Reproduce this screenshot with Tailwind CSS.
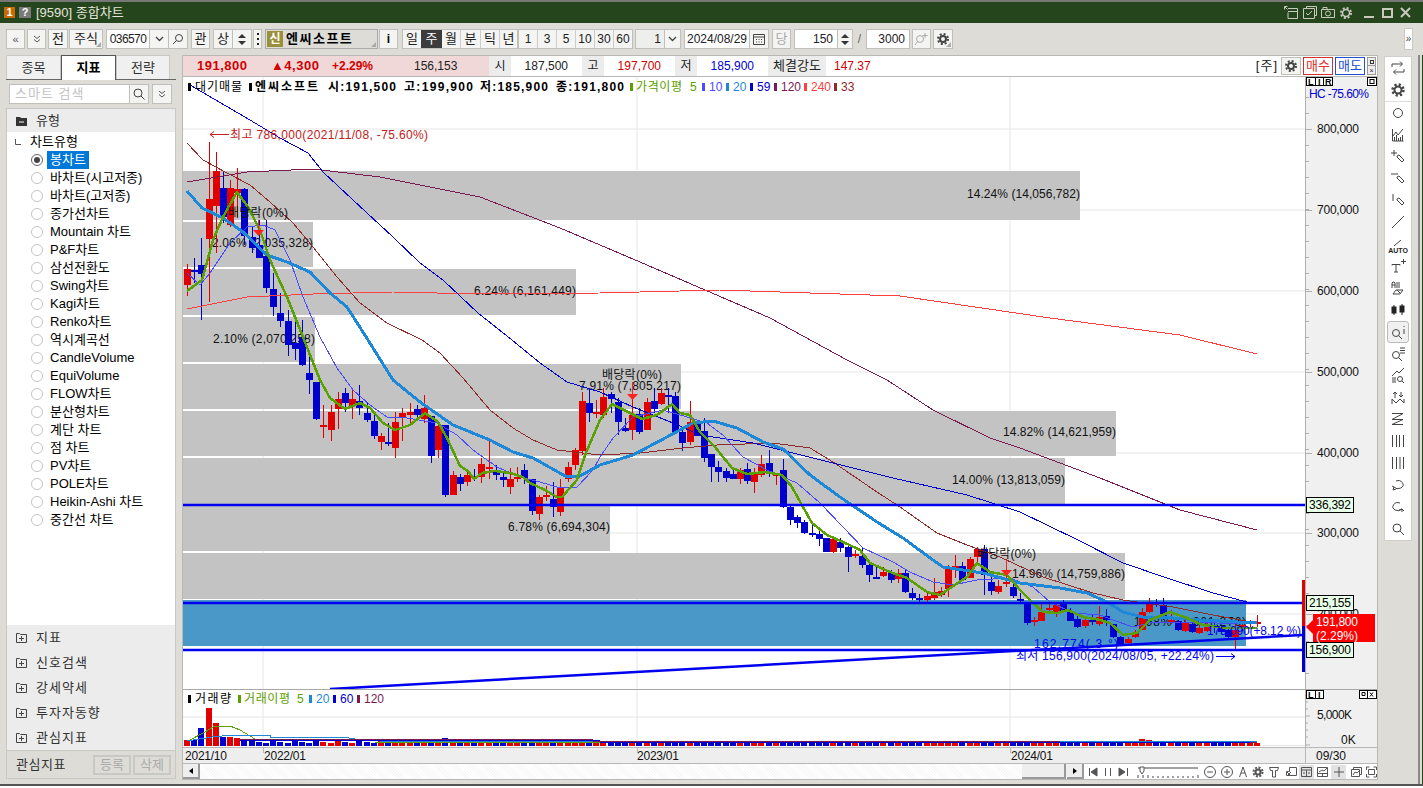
<!DOCTYPE html>
<html lang="ko">
<head>
<meta charset="utf-8">
<title>[9590] 종합차트</title>
<script src="https://cdn.jsdelivr.net/npm/@tailwindcss/browser@4"></script>
</head>
<body class="bg-white">
<div class="relative h-[786px] w-[1423px] overflow-hidden border-b-2 border-[#555] bg-[#dddcd7] text-xs text-[#222] [font-family:'Liberation_Sans','Noto_Sans_CJK_KR',sans-serif]">

  <!-- title bar -->
  <div class="flex h-[23px] items-center border-t-2 border-[#777] bg-[#25461c] pl-1 pr-3 text-[#e4e4dc]">
    <span class="flex h-[11px] w-[11px] items-center justify-center bg-[#c86a00] text-[11px] font-bold leading-none text-white">1</span>
    <span class="ml-[4px] flex h-[11px] w-[12px] items-center justify-center bg-[#7a7a7a] text-[11px] font-bold leading-none text-white">?</span>
    <span class="ml-[5px] text-[13px]">[9590] 종합차트</span>
    <div class="ml-auto flex items-center text-[#c9c9c0]">
      <svg class="mr-[5px]" width="14" height="13" viewBox="0 0 14 13" fill="none" stroke="currentColor"><path d="M4 2.5h9.5v10h-9.5v-6M4 5.5h9.5M.5 .5l3 3M.5 .5h3M.5 .5v3"/></svg>
      <svg class="mr-[4px]" width="14" height="13" viewBox="0 0 14 13" fill="none" stroke="currentColor"><path d="M3.500 2.500v-2h10v9h-2M.5 2.500h11v10h-11zM3 7l2 2 4-4"/></svg>
      <svg class="mr-[5px]" width="14" height="13" viewBox="0 0 14 13" fill="none" stroke="currentColor"><path d="M.5 3.500h13v8h-13zM2 3.500v-2h4v2"/><circle cx="7" cy="7.500" r="2.500"/></svg>
      <svg class="mr-[12px]" width="12" height="12" viewBox="0 0 12 12" fill="none" stroke="currentColor"><circle cx="6" cy="6" r="3.500" stroke-width="1.500"/><circle cx="6" cy="6" r="5" stroke-width="2" stroke-dasharray="2 1.930"/></svg>
      <span class="mr-[8px] mt-[9px] h-[2px] w-[10px] bg-current"></span>
      <span class="mr-[7px] h-[10px] w-[11px] border-2 border-current"></span>
      <svg width="11" height="11" viewBox="0 0 11 11" stroke="currentColor" stroke-width="2"><path d="M1 1l9 9M10 1l-9 9"/></svg>
    </div>
  </div>

  <!-- toolbar -->
  <div class="relative flex h-[32px] items-start pl-[6px] pt-[6px]">
    <button class="flex h-5 w-[19px] items-center justify-center border border-[#c0c0ba] bg-[#f4f4f2] text-[11px] text-[#555]">«</button>
    <button class="ml-[2px] flex h-5 w-[19px] items-center justify-center border border-[#c0c0ba] bg-[#f4f4f2]"><svg width="8" height="8" viewBox="0 0 8 8" fill="none" stroke="#555"><path d="M1 1l3 2.500 3-2.500M1 4.500l3 2.500 3-2.500"/></svg></button>
    <button class="ml-[2px] flex h-5 w-[20px] items-center justify-center border border-[#c0c0ba] bg-[#f4f4f2] text-[13px]">전</button>
    <button class="relative ml-[1px] flex h-5 w-[34px] items-center justify-center border border-[#c0c0ba] bg-[#f4f4f2] text-[13px]">주식<span class="absolute bottom-[1px] right-[1px] h-0 w-0 border-b-[5px] border-l-[5px] border-b-[#aaa] border-l-transparent"></span></button>
    <span class="ml-[3px] flex h-5 w-[44px] items-center justify-center border border-[#c0c0ba] bg-white tracking-[-.6px]">036570</span>
    <button class="flex h-5 w-[19px] items-center justify-center border border-l-0 border-[#c0c0ba] bg-[#f4f4f2]"><svg width="9" height="6" viewBox="0 0 9 6" fill="none" stroke="#444" stroke-width="1.300"><path d="M1 1l3.500 3.500L8 1"/></svg></button>
    <button class="flex h-5 w-[19px] items-center justify-center border border-l-0 border-[#c0c0ba] bg-[#f4f4f2]"><svg width="12" height="12" viewBox="0 0 12 12" fill="none" stroke="#444"><circle cx="7" cy="5" r="3.500"/><path d="M4.500 7.500L1 11"/></svg></button>
    <button class="ml-[3px] flex h-5 w-[19px] items-center justify-center border border-[#c0c0ba] bg-[#f4f4f2] text-[13px]">관</button>
    <button class="ml-[3px] flex h-5 w-[20px] items-center justify-center border border-[#c0c0ba] bg-[#f4f4f2] text-[13px]">상</button>
    <button class="flex h-5 w-[19px] flex-col items-center justify-center gap-[3px] border border-l-0 border-[#c0c0ba] bg-[#f4f4f2]"><span class="h-0 w-0 border-x-[4px] border-b-[4px] border-x-transparent border-b-[#333]"></span><span class="h-0 w-0 border-x-[4px] border-t-[4px] border-x-transparent border-t-[#333]"></span></button>
    <button class="ml-[1px] flex h-5 w-[9px] flex-col items-center justify-center gap-[3px] border border-[#c0c0ba] bg-[#f4f4f2]"><span class="h-[2px] w-[2px] bg-[#222]"></span><span class="h-[2px] w-[2px] bg-[#222]"></span><span class="h-[2px] w-[2px] bg-[#222]"></span></button>
    <div class="relative ml-[3px] flex h-5 w-[113px] items-center border border-[#aaa] bg-[#dddcd7] pl-[1px]">
      <span class="flex h-4 w-4 items-center justify-center bg-[#9a8f3a] font-bold text-white">신</span>
      <span class="ml-[3px] text-[13px] font-bold tracking-[1.500px] text-black">엔씨소프트</span>
      <span class="absolute bottom-[1px] right-[1px] h-0 w-0 border-b-[5px] border-l-[5px] border-b-[#aaa] border-l-transparent"></span>
    </div>
    <button class="ml-[1px] flex h-5 w-[19px] items-center justify-center border border-[#c0c0ba] bg-[#f4f4f2] font-bold text-black">i</button>
    <div class="ml-[4px] flex h-5 border border-[#c0c0ba] bg-[#f4f4f2] text-center text-[13px] leading-[18px]">
      <span class="w-[18px]">일</span><span class="w-[21px] bg-[#3c3c3c] text-white">주</span><span class="w-[18px]">월</span><span class="w-[20px] border-l border-[#ccc]">분</span><span class="w-[19px] border-l border-[#ccc]">틱</span><span class="w-[18px] border-l border-[#ccc]">년</span>
    </div>
    <div class="flex h-5 border border-[#c0c0ba] bg-[#f4f4f2] text-center leading-[18px]">
      <span class="w-[18px]">1</span><span class="w-[19px] border-l border-[#ccc]">3</span><span class="w-[19px] border-l border-[#ccc]">5</span><span class="w-[19px] border-l border-[#ccc]">10</span><span class="w-[19px] border-l border-[#ccc]">30</span><span class="w-[19px] border-l border-[#ccc]">60</span>
    </div>
    <span class="ml-[2px] flex h-5 w-[30px] items-center justify-end border border-[#c0c0ba] bg-[#eeeeec] pr-[3px]">1</span>
    <button class="flex h-5 w-[16px] items-center justify-center border border-l-0 border-[#c0c0ba] bg-[#f4f4f2]"><svg width="9" height="6" viewBox="0 0 9 6" fill="none" stroke="#444" stroke-width="1.300"><path d="M1 1l3.500 3.500L8 1"/></svg></button>
    <span class="ml-[3px] flex h-5 w-[66px] items-center justify-center border border-[#c0c0ba] bg-white">2024/08/29</span>
    <button class="flex h-5 w-[19px] items-center justify-center border border-l-0 border-[#c0c0ba] bg-[#f4f4f2]"><svg width="12" height="11" viewBox="0 0 12 11" fill="none" stroke="#444"><path d="M.5 .5h11v10h-11zM.5 3h11M3 5.500h1M5.500 5.500h1M8 5.500h1M3 8h1M5.500 8h1M8 8h1"/></svg></button>
    <button class="ml-[3px] flex h-5 w-[19px] items-center justify-center border border-[#c0c0ba] bg-[#f4f4f2] text-[13px] text-[#aaa]">당</button>
    <span class="ml-[3px] flex h-5 w-[44px] items-center justify-end border border-[#c0c0ba] bg-white pr-[4px]">150</span>
    <button class="flex h-5 w-[15px] flex-col items-center justify-center gap-[3px] border border-l-0 border-[#c0c0ba] bg-[#f4f4f2]"><span class="h-0 w-0 border-x-[4px] border-b-[4px] border-x-transparent border-b-[#333]"></span><span class="h-0 w-0 border-x-[4px] border-t-[4px] border-x-transparent border-t-[#333]"></span></button>
    <span class="flex h-5 w-[13px] items-center justify-center text-[#666]">/</span>
    <span class="flex h-5 w-[44px] items-center justify-end border border-[#c0c0ba] bg-white pr-[4px]">3000</span>
    <button class="ml-[2px] flex h-5 w-[19px] items-center justify-center border border-[#c0c0ba] bg-[#f4f4f2]"><svg width="15" height="14" viewBox="0 0 15 14" fill="none" stroke="#aaa"><circle cx="6" cy="7" r="3.500"/><path d="M3.500 9.500L1 13M11 1v5M8.500 3.500h5"/></svg></button>
    <button class="relative ml-[2px] flex h-5 w-[20px] items-center justify-center border border-[#c0c0ba] bg-[#f4f4f2]"><svg width="12" height="12" viewBox="0 0 12 12" fill="none" stroke="#444"><circle cx="6" cy="6" r="3" stroke-width="2"/><circle cx="6" cy="6" r="5" stroke-width="2" stroke-dasharray="2 1.930"/></svg><span class="absolute bottom-[1px] right-[1px] h-0 w-0 border-b-[5px] border-l-[5px] border-b-[#aaa] border-l-transparent"></span></button>
    <span class="absolute left-[1404px] top-[5px] flex h-[22px] w-[9px] items-center justify-center border border-[#c8c8c4] bg-white text-[10px] text-[#444]">»</span>
  </div>

  <div class="flex h-[731px] items-start pl-[6px]">
    <!-- left panel -->
    <aside class="h-[724px] w-[170px] shrink-0">
      <div class="flex h-[25px] items-end border-b border-[#666] text-[13px] text-[#333]">
        <span class="flex h-[24px] w-[55px] items-center justify-center border border-b-0 border-[#c8c8c4] bg-[#f0f0f0]">종목</span>
        <span class="-mb-px flex h-[25px] w-[55px] items-center justify-center border border-b-0 border-[#555] bg-white font-bold text-black">지표</span>
        <span class="flex h-[24px] w-[54px] items-center justify-center border border-b-0 border-[#c8c8c4] bg-[#f0f0f0]">전략</span>
      </div>
      <div class="flex h-[28px] items-start pl-[3px] pt-[4px]">
        <span class="flex h-5 w-[121px] items-center border border-[#c0c0ba] bg-white pl-[5px] text-[13px] tracking-[1px] text-[#c4c4c4]">스마트 검색</span>
        <button class="flex h-5 w-[19px] items-center justify-center border border-l-0 border-[#c0c0ba] bg-[#f4f4f2]"><svg width="12" height="12" viewBox="0 0 12 12" fill="none" stroke="#444"><circle cx="5" cy="5" r="4"/><path d="M8 8l3.500 3.500"/></svg></button>
        <button class="ml-[3px] flex h-5 w-[20px] items-center justify-center border border-[#c0c0ba] bg-[#f4f4f2]"><svg width="8" height="8" viewBox="0 0 8 8" fill="none" stroke="#555"><path d="M1 1l3 2.500 3-2.500M1 4.500l3 2.500 3-2.500"/></svg></button>
      </div>
      <div class="h-[671px] border border-[#c8c8c4] bg-white">
        <div class="flex h-[23px] items-center bg-[#ececec] pl-[9px] text-[13px] text-[#333]">
          <svg width="11" height="10" viewBox="0 0 11 10"><path d="M0 1h4l1 1h6v8H0z" fill="#333"/><path d="M3 6h5" stroke="#fff"/></svg>
          <span class="ml-[9px]">유형</span>
        </div>
        <div class="h-[493px] pt-[1px] text-black">
          <div class="flex h-[18px] items-center pl-[8px]"><svg width="6" height="6" viewBox="0 0 6 6" fill="none" stroke="#555"><path d="M.5 0v5.500H6"/></svg><span class="ml-[9px] text-[13px]">차트유형</span></div>
          <div class="flex h-[18px] items-center pl-[24px]"><span class="flex h-3 w-3 items-center justify-center rounded-full border border-[#666] bg-white"><span class="h-[6px] w-[6px] rounded-full bg-[#444]"></span></span><span class="ml-[4px] h-[18px] bg-[#0078d7] px-[3px] text-[13px] text-white">봉차트</span></div>
          <div class="flex h-[18px] items-center pl-[24px]"><span class="h-3 w-3 rounded-full border border-[#c4c4c4]"></span><span class="ml-[7px] text-[13px]">바차트(시고저종)</span></div>
          <div class="flex h-[18px] items-center pl-[24px]"><span class="h-3 w-3 rounded-full border border-[#c4c4c4]"></span><span class="ml-[7px] text-[13px]">바차트(고저종)</span></div>
          <div class="flex h-[18px] items-center pl-[24px]"><span class="h-3 w-3 rounded-full border border-[#c4c4c4]"></span><span class="ml-[7px] text-[13px]">종가선차트</span></div>
          <div class="flex h-[18px] items-center pl-[24px]"><span class="h-3 w-3 rounded-full border border-[#c4c4c4]"></span><span class="ml-[7px] text-[13px]">Mountain 차트</span></div>
          <div class="flex h-[18px] items-center pl-[24px]"><span class="h-3 w-3 rounded-full border border-[#c4c4c4]"></span><span class="ml-[7px] text-[13px]">P&amp;F차트</span></div>
          <div class="flex h-[18px] items-center pl-[24px]"><span class="h-3 w-3 rounded-full border border-[#c4c4c4]"></span><span class="ml-[7px] text-[13px]">삼선전환도</span></div>
          <div class="flex h-[18px] items-center pl-[24px]"><span class="h-3 w-3 rounded-full border border-[#c4c4c4]"></span><span class="ml-[7px] text-[13px]">Swing차트</span></div>
          <div class="flex h-[18px] items-center pl-[24px]"><span class="h-3 w-3 rounded-full border border-[#c4c4c4]"></span><span class="ml-[7px] text-[13px]">Kagi차트</span></div>
          <div class="flex h-[18px] items-center pl-[24px]"><span class="h-3 w-3 rounded-full border border-[#c4c4c4]"></span><span class="ml-[7px] text-[13px]">Renko차트</span></div>
          <div class="flex h-[18px] items-center pl-[24px]"><span class="h-3 w-3 rounded-full border border-[#c4c4c4]"></span><span class="ml-[7px] text-[13px]">역시계곡선</span></div>
          <div class="flex h-[18px] items-center pl-[24px]"><span class="h-3 w-3 rounded-full border border-[#c4c4c4]"></span><span class="ml-[7px] text-[13px]">CandleVolume</span></div>
          <div class="flex h-[18px] items-center pl-[24px]"><span class="h-3 w-3 rounded-full border border-[#c4c4c4]"></span><span class="ml-[7px] text-[13px]">EquiVolume</span></div>
          <div class="flex h-[18px] items-center pl-[24px]"><span class="h-3 w-3 rounded-full border border-[#c4c4c4]"></span><span class="ml-[7px] text-[13px]">FLOW차트</span></div>
          <div class="flex h-[18px] items-center pl-[24px]"><span class="h-3 w-3 rounded-full border border-[#c4c4c4]"></span><span class="ml-[7px] text-[13px]">분산형차트</span></div>
          <div class="flex h-[18px] items-center pl-[24px]"><span class="h-3 w-3 rounded-full border border-[#c4c4c4]"></span><span class="ml-[7px] text-[13px]">계단 차트</span></div>
          <div class="flex h-[18px] items-center pl-[24px]"><span class="h-3 w-3 rounded-full border border-[#c4c4c4]"></span><span class="ml-[7px] text-[13px]">점 차트</span></div>
          <div class="flex h-[18px] items-center pl-[24px]"><span class="h-3 w-3 rounded-full border border-[#c4c4c4]"></span><span class="ml-[7px] text-[13px]">PV차트</span></div>
          <div class="flex h-[18px] items-center pl-[24px]"><span class="h-3 w-3 rounded-full border border-[#c4c4c4]"></span><span class="ml-[7px] text-[13px]">POLE차트</span></div>
          <div class="flex h-[18px] items-center pl-[24px]"><span class="h-3 w-3 rounded-full border border-[#c4c4c4]"></span><span class="ml-[7px] text-[13px]">Heikin-Ashi 차트</span></div>
          <div class="flex h-[18px] items-center pl-[24px]"><span class="h-3 w-3 rounded-full border border-[#c4c4c4]"></span><span class="ml-[7px] text-[13px]">중간선 차트</span></div>
        </div>
        <div class="h-[125px] bg-[#ececec] text-[13px] text-[#333]">
          <div class="flex h-[25px] items-center pl-[9px]"><svg width="11" height="10" viewBox="0 0 11 10" fill="none" stroke="#444"><path d="M.5 .5h3l1 1h6v8h-10zM3 5.500h5M5.500 3v5"/></svg><span class="ml-[9px] tracking-[1px]">지표</span></div>
          <div class="flex h-[25px] items-center pl-[9px]"><svg width="11" height="10" viewBox="0 0 11 10" fill="none" stroke="#444"><path d="M.5 .5h3l1 1h6v8h-10zM3 5.500h5M5.500 3v5"/></svg><span class="ml-[9px] tracking-[1px]">신호검색</span></div>
          <div class="flex h-[25px] items-center pl-[9px]"><svg width="11" height="10" viewBox="0 0 11 10" fill="none" stroke="#444"><path d="M.5 .5h3l1 1h6v8h-10zM3 5.500h5M5.500 3v5"/></svg><span class="ml-[9px] tracking-[1px]">강세약세</span></div>
          <div class="flex h-[25px] items-center pl-[9px]"><svg width="11" height="10" viewBox="0 0 11 10" fill="none" stroke="#444"><path d="M.5 .5h3l1 1h6v8h-10zM3 5.500h5M5.500 3v5"/></svg><span class="ml-[9px] tracking-[1px]">투자자동향</span></div>
          <div class="flex h-[25px] items-center pl-[9px]"><svg width="11" height="10" viewBox="0 0 11 10" fill="none" stroke="#444"><path d="M.5 .5h3l1 1h6v8h-10zM3 5.500h5M5.500 3v5"/></svg><span class="ml-[9px] tracking-[1px]">관심지표</span></div>
        </div>
        <div class="flex h-[28px] items-center border-t border-[#c8c8c4] bg-[#dddcd7] pl-[9px] text-[13px] text-[#333]">
          <span class="w-[77px] tracking-[.5px]">관심지표</span>
          <button class="flex h-5 w-[38px] items-center justify-center border-2 border-[#c8c8c4] text-[#aaa]">등록</button>
          <button class="ml-[2px] flex h-5 w-[38px] items-center justify-center border-2 border-[#c8c8c4] text-[#aaa]">삭제</button>
        </div>
      </div>
    </aside>

    <!-- chart panel -->
    <main class="ml-[6px] flex h-[725px] w-[1196px] shrink-0 flex-col border border-[#b8b8b4] bg-white">
      <div class="flex h-[20px] shrink-0 items-center">
        <div class="flex h-full w-[306px] items-center bg-[#f0d8d8] font-bold">
          <span class="ml-[14px] w-[74px] text-[13px] tracking-[.5px] text-[#d00000]">191,800</span>
          <span class="w-[61px] text-[13px] tracking-[.5px] text-[#d00000]">▲4,300</span>
          <span class="w-[82px] text-[#d00000]">+2.29%</span>
          <span class="font-normal">156,153</span>
        </div>
        <span class="flex h-full w-[22px] items-center justify-center bg-[#ececec]">시</span>
        <span class="w-[57px] text-right">187,500</span><span class="w-[14px]"></span>
        <span class="flex h-full w-[22px] items-center justify-center bg-[#ececec]">고</span>
        <span class="w-[57px] text-right text-[#d00000]">197,700</span><span class="w-[14px]"></span>
        <span class="flex h-full w-[22px] items-center justify-center bg-[#ececec]">저</span>
        <span class="w-[57px] text-right text-[#0000d0]">185,900</span><span class="w-[14px]"></span>
        <span class="flex h-full w-[58px] items-center justify-center bg-[#ececec] text-[13px]">체결강도</span>
        <span class="ml-[8px] text-[#d00000]">147.37</span>
        <div class="ml-auto flex h-full items-center pr-[1px]">
          <span class="mr-[3px] text-[13px] tracking-[1px]">[주]</span>
          <button class="flex h-[18px] w-[20px] items-center justify-center border border-[#c0c0ba] bg-[#f4f4f2]"><svg width="12" height="12" viewBox="0 0 12 12" fill="none" stroke="#444"><circle cx="6" cy="6" r="3" stroke-width="2"/><circle cx="6" cy="6" r="5" stroke-width="2" stroke-dasharray="2 1.930"/></svg></button>
          <button class="ml-[2px] flex h-[18px] w-[30px] items-center justify-center border border-[#d03030] text-[13px] text-[#e03030]">매수</button>
          <button class="ml-[2px] flex h-[18px] w-[30px] items-center justify-center border border-[#2050d0] text-[13px] text-[#2050d0]">매도</button>
          <div class="ml-[2px] flex h-[18px] w-[9px] flex-col">
            <span class="flex h-[9px] items-center justify-center border border-[#999] bg-[#eee]"><span class="h-[4px] w-[4px] border border-[#333]"></span></span>
            <span class="flex h-[9px] items-center justify-center border border-t-0 border-[#999] bg-[#eee] text-[7px] leading-none">×</span>
          </div>
        </div>
      </div>
      <div class="h-px shrink-0 bg-[#b8b8b4]"></div>

      <!-- price pane -->
      <svg id="price" class="block shrink-0" width="1194" height="612" viewBox="183 77 1194 612" font-size="12" fill="#111">
        <rect x="1305" y="77" width="72" height="612" fill="#f0f0f0"/>
        <path d="M183 129H1305M183 210H1305M183 291H1305M183 372H1305M183 453H1305M183 533H1305M183 614H1305M263 77V689M637 77V689M1010 77V689" stroke="#e6e6e6"/>
        <g fill="#c3c3c3">
          <rect x="183" y="171" width="897" height="49"/>
          <rect x="183" y="222" width="130" height="45"/>
          <rect x="183" y="269" width="393" height="46"/>
          <rect x="183" y="317" width="132" height="45"/>
          <rect x="183" y="364" width="498" height="45"/>
          <rect x="183" y="411" width="933" height="45"/>
          <rect x="183" y="458" width="882" height="46"/>
          <rect x="183" y="505" width="427" height="46"/>
          <rect x="183" y="553" width="942" height="46"/>
        </g>
        <rect x="183" y="600" width="1063" height="46" fill="#4a98c8"/>
        <g>
          <text x="967" y="198" textLength="113">14.24% (14,056,782)</text>
          <text x="212" y="247" textLength="101">2.06% (2,035,328)</text>
          <text x="474" y="295" textLength="102">6.24% (6,161,449)</text>
          <text x="213" y="343" textLength="102">2.10% (2,070,258)</text>
          <text x="579" y="390" textLength="102">7.91% (7,805,217)</text>
          <text x="1003" y="436" textLength="113">14.82% (14,621,959)</text>
          <text x="952" y="484" textLength="113">14.00% (13,813,059)</text>
          <text x="508" y="531" textLength="102">6.78% (6,694,304)</text>
          <text x="1012" y="578" textLength="113">14.96% (14,759,886)</text>
          <text x="1134" y="626" textLength="112">1.98% (1,661,276)</text>
        </g>
        <g id="candles"></g>
        <g fill="none" stroke-linejoin="round" shape-rendering="crispEdges">
          <polyline stroke="#7b1a50" points="187,182 247,172 313,169 380,177 480,197 560,228 640,262 770,318 847,360 887,380 933,410 990,438 1020,448 1100,478 1180,510 1257,530"/>
          <polyline stroke="#ff4040" points="187,309 247,297 313,294 393,292 480,294 600,293 720,290 900,296 1050,318 1180,335 1257,354"/>
          <polyline stroke="#8f2a2a" points="187,143 203,160 227,173 250,185 270,202 293,223 313,247 337,277 360,303 387,323 422,340 440,353 463,378 490,410 513,428 533,440 557,450 600,455 640,453 683,448 717,445 773,443 810,448 833,462 877,492 900,507 937,533 967,545 1000,557 1043,577 1093,593 1123,600 1173,607 1213,615 1257,623"/>
          <polyline stroke="#0000d0" points="190,85 250,120 280,138 308,153 323,172 353,200 393,237 420,263 443,280 478,313 512,340 540,363 567,382 600,392 633,407 673,423 700,435 753,443 813,458 893,478 967,495 1020,512 1078,540 1123,563 1167,578 1213,593 1247,602"/>
          <polyline stroke="#4a4aff" points="187,273 200,285 210,273 230,243 247,227 263,225 275,230 290,260 303,297 320,337 337,368 353,390 370,405 387,417 407,418 437,423 457,435 473,450 497,467 520,477 540,482 560,488 577,487 593,470 600,457 613,438 633,417 663,410 687,417 707,423 723,435 743,457 767,470 797,483 820,503 843,527 863,548 893,562 910,572 933,582 953,585 977,580 1010,578 1033,587 1050,602 1073,613 1100,615 1113,620 1133,627 1153,622 1180,622 1217,623 1257,623"/>
          <polyline stroke="#1e88d8" stroke-width="3" points="187,191 202,208 223,218 243,232 267,255 287,262 310,272 330,293 347,307 368,340 393,380 420,402 453,425 490,440 513,452 533,458 567,477 580,476 600,465 633,455 667,437 693,423 713,421 737,428 763,442 783,449 810,475 840,497 877,522 903,538 933,560 943,567 983,573 1020,583 1060,588 1087,593 1107,602 1123,612 1143,617 1173,618 1200,620 1257,623"/>
          <polyline stroke="#5aa000" stroke-width="2.500" points="187,291 202,280 213,240 223,217 237,192 248,207 260,230 270,260 287,297 303,337 312,360 320,380 330,398 345,409 360,403 370,408 383,423 395,430 410,425 425,413 438,422 447,438 460,466 468,471 474,479 482,473 495,471 510,473 523,477 530,483 545,490 557,497 562,497 577,480 585,455 600,420 612,404 628,412 642,419 657,415 672,404 680,413 690,415 700,432 715,447 732,468 747,474 765,472 782,475 792,487 803,507 812,523 827,535 843,542 860,550 870,563 890,572 907,578 927,592 940,595 952,587 967,577 977,563 990,572 1007,575 1020,590 1033,603 1043,612 1057,613 1068,610 1083,617 1100,620 1110,623 1123,635 1137,633 1150,620 1170,612 1187,618 1203,625 1227,628 1257,628"/>
        </g>
        <path d="M183 505H1305M183 603H1305M183 650H1305" stroke="#0000f0" stroke-width="2.500"/>
        <path d="M330 689L1302 635" stroke="#0000f0" stroke-width="2.500"/>
        <!-- dividend arrows -->
        <g fill="#ff2020" stroke="#ff2020">
          <path d="M258.500 220V230" fill="none"/><path d="M253 230h11l-5.500 6z" stroke="none"/>
          <path d="M632.500 382V394" fill="none"/><path d="M627 394h11l-5.500 6z" stroke="none"/>
          <path d="M1006.500 560V570" fill="none"/><path d="M1001 570h11l-5.500 6z" stroke="none"/>
        </g>
        <text x="228" y="217" textLength="60">배당락(0%)</text>
        <text x="602" y="379" textLength="60">배당락(0%)</text>
        <text x="977" y="558" textLength="59">배당락(0%)</text>
        <!-- high and low -->
        <path d="M210 134.500H229M210 134.500l4-3M210 134.500l4 3" stroke="#c02020" fill="none"/>
        <text x="230" y="139" fill="#c02020" textLength="198">최고 786,000(2021/11/08, -75.60%)</text>
        <text x="1016" y="660" fill="#0000f0" textLength="198">최저 156,900(2024/08/05, +22.24%)</text>
        <path d="M1216 656.500H1235M1235 656.500l-4-3M1235 656.500l-4 3" stroke="#0000f0" fill="none"/>
        <text x="1034" y="648" fill="#0000f0" textLength="84">162,774(  3 °)</text>
        <text x="1207" y="635" fill="#0000f0" textLength="94">175,090(+8.12 %)</text>
        <!-- legend -->
        <rect x="188" y="83" width="3" height="8" fill="#000"/><text x="195" y="91" fill="#000" textLength="47">대기매물</text>
        <rect x="249" y="83" width="3" height="8" fill="#000"/>
        <g font-weight="bold" fill="#000">
          <text x="255" y="91" textLength="63">엔씨소프트</text>
          <text x="328" y="91" textLength="68">시:191,500</text>
          <text x="404" y="91" textLength="69">고:199,900</text>
          <text x="480" y="91" textLength="68">저:185,900</text>
          <text x="556" y="91" textLength="68">종:191,800</text>
        </g>
        <rect x="630" y="83" width="3" height="8" fill="#5aa000"/><text x="636" y="91" fill="#5aa000" textLength="46">가격이평</text><text x="690" y="91" fill="#5aa000">5</text>
        <rect x="702" y="83" width="3" height="8" fill="#4a4aff"/><text x="709" y="91" fill="#4a4aff">10</text>
        <rect x="726" y="83" width="3" height="8" fill="#1e88d8"/><text x="733" y="91" fill="#1e88d8">20</text>
        <rect x="750" y="83" width="3" height="8" fill="#0000d0"/><text x="757" y="91" fill="#0000d0">59</text>
        <rect x="774" y="83" width="3" height="8" fill="#7b1a50"/><text x="781" y="91" fill="#7b1a50">120</text>
        <rect x="804" y="83" width="3" height="8" fill="#ff4040"/><text x="811" y="91" fill="#ff4040">240</text>
        <rect x="834" y="83" width="3" height="8" fill="#8f2a2a"/><text x="841" y="91" fill="#8f2a2a">33</text>
        <!-- price axis -->
        <path d="M1305.500 77V689" stroke="#b0b0b0"/>
        <path id="axisTicks" stroke="#b0b0b0" fill="none"/>
        <g>
          <text x="1317" y="133" textLength="42">800,000</text>
          <text x="1317" y="214" textLength="42">700,000</text>
          <text x="1317" y="295" textLength="42">600,000</text>
          <text x="1317" y="376" textLength="42">500,000</text>
          <text x="1317" y="457" textLength="42">400,000</text>
          <text x="1317" y="537" textLength="42">300,000</text>
          <text x="1317" y="618" textLength="42">200,000</text>
        </g>
        <text x="1309" y="98" fill="#0000d0" textLength="60">HC -75.60%</text>
        <g fill="#fff" stroke="#000"><rect x="1306.500" y="77.500" width="9" height="8"/><rect x="1315.500" y="77.500" width="8" height="8"/><rect x="1323.500" y="77.500" width="9" height="8"/><rect x="1367.500" y="77.500" width="9" height="8"/></g>
        <g font-size="9" fill="#000" font-weight="bold"><text x="1308" y="85">L</text><text x="1318" y="85">I</text><text x="1325" y="85">R</text></g>
        <rect x="1370" y="79.500" width="4" height="4" fill="none" stroke="#000"/>
        <!-- level labels -->
        <rect x="1302" y="580" width="3" height="46" fill="#e00000"/>
        <rect x="1302" y="626" width="3" height="46" fill="#0000d0"/>
        <g fill="#e8ffe8" stroke="#000">
          <rect x="1306.500" y="497.500" width="47" height="15"/>
          <rect x="1306.500" y="595.500" width="47" height="15"/>
          <rect x="1306.500" y="642.500" width="47" height="15"/>
        </g>
        <g fill="#000">
          <text x="1309" y="509" textLength="42">336,392</text>
          <text x="1309" y="607" textLength="42">215,155</text>
          <text x="1309" y="654" textLength="42">156,900</text>
        </g>
        <path d="M1306 627l7-7v14z" fill="#ff0000"/>
        <rect x="1313" y="614" width="62" height="28" fill="#ff0000"/>
        <text x="1316" y="626" fill="#fff" textLength="42">191,800</text>
        <text x="1316" y="640" fill="#fff" textLength="42">(2.29%)</text>
      </svg>
      <div class="h-px shrink-0 bg-[#a8a8a8]"></div>

      <!-- volume pane -->
      <svg id="volume" class="block shrink-0" width="1194" height="74" viewBox="183 690 1194 74" font-size="12" fill="#111">
        <rect x="1305" y="690" width="72" height="57" fill="#f0f0f0"/>
        <path d="M183 717H1305M183 745.500H1305M263 690V747M637 690V747M1010 690V747" stroke="#e6e6e6"/>
        <g id="bars"></g>
        <g fill="none" shape-rendering="crispEdges">
          <polyline stroke="#5aa000" points="190,740 205,732 213,727 230,726 240,730 255,739"/>
          <path d="M300 739H355M375 742H1000M1060 742H1250" stroke="#5aa000"/>
          <polyline stroke="#1e88d8" points="187,741 212,737 233,735 270,735 270,737 342,737 355,739 380,741 1257,742"/>
          <path d="M240 739.500H593M593 741H1060M1060 742.500H1257" stroke="#7b1a50"/>
          <path d="M240 740.500H600M600 742H1250" stroke="#0000d0"/>
        </g>
        <rect x="188" y="695" width="3" height="8" fill="#000"/><text x="195" y="703" fill="#000" textLength="36">거래량</text>
        <rect x="238" y="695" width="3" height="8" fill="#5aa000"/><text x="244" y="703" fill="#5aa000" textLength="46">거래이평</text><text x="297" y="703" fill="#5aa000">5</text>
        <rect x="309" y="695" width="3" height="8" fill="#1e88d8"/><text x="316" y="703" fill="#1e88d8">20</text>
        <rect x="333" y="695" width="3" height="8" fill="#0000d0"/><text x="340" y="703" fill="#0000d0">60</text>
        <rect x="357" y="695" width="3" height="8" fill="#7b1a50"/><text x="364" y="703" fill="#7b1a50">120</text>
        <path d="M1305.500 690V747" stroke="#b0b0b0"/>
        <path d="M1306 716H1310M1306 702H1308M1306 709H1308M1306 723H1308M1306 730H1308M1306 737H1308M1306 745H1310" stroke="#b0b0b0"/>
        <text x="1317" y="719" textLength="35">5,000K</text>
        <text x="1341" y="744">0K</text>
        <g fill="#fff" stroke="#000"><rect x="1306.500" y="690.500" width="9" height="8"/><rect x="1315.500" y="690.500" width="8" height="8"/><rect x="1359.500" y="690.500" width="8" height="8"/><rect x="1367.500" y="690.500" width="9" height="8"/></g>
        <g font-size="9" fill="#000" font-weight="bold"><text x="1308" y="698">L</text><text x="1318" y="698">I</text></g>
        <path d="M1362 692.500h3v3h-3zM1370 692.500l3 4M1373 692.500l-3 4" fill="none" stroke="#000"/>
        <!-- date strip -->
        <rect x="183" y="747" width="1194" height="17" fill="#eeeeee"/>
        <path d="M183 747.500H1377M183 763.500H1377M1305.500 747V764M263.500 747V753M637.500 747V753M1010.500 747V753" stroke="#b8b8b8"/>
        <text x="185" y="760" textLength="42">2021/10</text>
        <text x="264" y="760" textLength="42">2022/01</text>
        <text x="637" y="760" textLength="42">2023/01</text>
        <text x="1011" y="760" textLength="42">2024/01</text>
        <text x="1316" y="760" textLength="30">09/30</text>
      </svg>

      <!-- scroll bar and chart controls -->
      <div class="flex h-[15px] shrink-0 items-center bg-[#eeeeee] text-[#444]">
        <button class="flex h-[15px] w-[17px] items-center justify-center border-r-2 border-b-2 border-[#999] bg-[#eeeeee]"><span class="h-0 w-0 border-y-[3px] border-r-[4px] border-y-transparent border-r-black"></span></button>
        <span class="h-[15px] w-[822px] bg-[repeating-linear-gradient(45deg,#f8f8f8_0_1px,#ffffff_1px_2px)]"></span>
        <span class="h-[15px] w-[44px] border-r-2 border-b-2 border-[#999] bg-[#eeeeee]"></span>
        <button class="ml-[1px] flex h-[15px] w-[17px] items-center justify-center border-r-2 border-b-2 border-[#999] bg-[#eeeeee]"><span class="h-0 w-0 border-y-[3px] border-l-[4px] border-y-transparent border-l-black"></span></button>
        <div class="flex h-[15px] w-[293px] items-center bg-white">
          <svg width="293" height="15" viewBox="1083 764 293 15" fill="none" stroke="#555">
            <path d="M1088.500 768v8M1096 768v8l-6-4zM1104.500 768v8M1109.500 768v8M1118 768v8l6-4zM1126.500 768v8" fill="#555"/>
            <path d="M1137 768H1197M1137 775v3M1142 775v3M1147 775v3M1152 776v2M1157 776v2M1162 776v2M1167 776v2M1172 776v2M1177 776v2M1182 776v2M1187 776v2M1192 776v2M1197 775v3" stroke="#444"/>
            <path d="M1139 767h4v4l-2 3-2-3z" fill="#fff"/>
            <circle cx="1209" cy="772" r="5.500"/><path d="M1206 772h6"/>
            <circle cx="1226" cy="772" r="5.500"/><path d="M1223 772h6M1226 769v6"/>
            <path d="M1238.500 777l3.500-10 3.500 10M1240 773h4"/>
            <circle cx="1257" cy="772" r="2.500" stroke-width="2"/><circle cx="1257" cy="772" r="4.500" stroke-width="2" stroke-dasharray="2 1.530"/>
            <path d="M1268.500 767.500h9l-1 3h-2v6.500h-3v-6.500h-2z"/>
            <path d="M1288.500 767.500h7v8h-10v-4h3zM1286 772l4 4M1290 772l-4 4" />
            <rect x="1298" y="765" width="15" height="14" fill="#e2e2e2" stroke="none"/>
            <path d="M1300.500 767.500h10v9h-10zM1300.500 770h10M1305.500 770v6.500M1302 773h2M1307 773h2"/>
            <path d="M1316.500 767.500h10v9h-10zM1316.500 773.500h10M1321.500 773.500v3M1318 772l3-2 2 1 3-3" />
            <rect x="1330" y="765" width="15" height="14" fill="#e2e2e2" stroke="none"/>
            <path d="M1338 767v10M1333 772h10"/>
            <path d="M1350.500 769.500h8v7h-8zM1352.500 769.500v-2h8v7h-2M1352 775l2-3 2 1 2-2" />
            <path d="M1365.500 770v-3h3M1372.500 767h3v3M1375.500 774v3h-3M1368.500 777h-3v-3M1367.500 769.500h6v5h-6z"/>
          </svg>
        </div>
      </div>
    </main>

    <!-- drawing tools -->
    <nav class="ml-[6px] mt-px flex h-[485px] w-[28px] shrink-0 flex-col items-center border border-[#cfcfcb] bg-white">
      <span class="flex h-[22px] items-center"><svg width="18" height="18" viewBox="0 0 18 18" fill="none" stroke="#444"><path d="M3 8V5h10M11 2.500L13.500 5 11 7.500M15 10v3H5M7 15.500L4.500 13 7 10.500"/></svg></span>
      <span class="flex h-[22px] items-center"><svg width="14" height="14" viewBox="0 0 14 14" fill="none" stroke="#444"><circle cx="7" cy="7" r="3.500" stroke-width="2"/><circle cx="7" cy="7" r="5.500" stroke-width="2.500" stroke-dasharray="2.200 2.120"/></svg></span>
      <span class="h-px w-full bg-[#ddd]"></span>
      <span class="flex h-[22px] items-center"><svg width="18" height="18" viewBox="0 0 18 18" fill="none" stroke="#444"><circle cx="9" cy="9" r="4.500"/></svg></span>
      <span class="flex h-[22px] items-center"><svg width="18" height="18" viewBox="0 0 18 18" fill="none" stroke="#444"><path d="M3.500 3v12h11M5.500 15v-4M7.500 15v-6M9.500 15v-3M11.500 15v-4M13.500 15v-6M4 10l3-4 2 3 5-6"/></svg></span>
      <span class="flex h-[22px] items-center"><svg width="18" height="18" viewBox="0 0 18 18" fill="none" stroke="#444"><path d="M2 5h6M5 2v6M8 8l2-1 5 5-2 2-5-5z"/></svg></span>
      <span class="flex h-[22px] items-center"><svg width="18" height="18" viewBox="0 0 18 18" fill="none" stroke="#444"><path d="M2 5h7M8 8l2-1 5 5-2 2-5-5z"/></svg></span>
      <span class="flex h-[22px] items-center"><svg width="18" height="18" viewBox="0 0 18 18" fill="none" stroke="#444"><path d="M4 3v7M8 8l2-1 5 5-2 2-5-5z"/></svg></span>
      <span class="flex h-[22px] items-center"><svg width="18" height="18" viewBox="0 0 18 18" fill="none" stroke="#444"><path d="M3 15L15 3"/></svg></span>
      <span class="flex h-[22px] flex-col items-center justify-end"><svg width="10" height="6" viewBox="0 0 10 6" fill="none" stroke="#444"><path d="M1 6L8 0"/></svg><span class="text-[7px] font-bold leading-[9px]">AUTO</span></span>
      <span class="flex h-[22px] items-center"><svg width="18" height="18" viewBox="0 0 18 18" fill="none" stroke="#444"><path d="M3 7.500h8M7 7.500V15M5 15h4M3 7.500v1M11 7.500v1M12 4.500h5M14.500 2v5"/></svg></span>
      <span class="flex h-[22px] items-center"><svg width="18" height="18" viewBox="0 0 18 18" fill="none" stroke="#444"><path d="M3 9V4l1-1h1l1 1v5M3 6h3M8 3v6M10 3v6M4 15l3-4h7l-3 4zM8 11l3 3"/></svg></span>
      <span class="flex h-[22px] items-center"><svg width="18" height="18" viewBox="0 0 18 18" fill="#222" stroke="#222"><path d="M5 4v10M13 3v11"/><rect x="3" y="6" width="4" height="6"/><rect x="11" y="5" width="4" height="6"/></svg></span>
      <span class="flex h-[22px] w-[22px] items-center justify-center rounded-[3px] border border-[#bbb] bg-[#f0f0f0]"><svg width="18" height="18" viewBox="0 0 18 18" fill="none" stroke="#444"><circle cx="7" cy="10" r="3.500"/><path d="M9.500 12.500L13 16M15 3v1M15 6v5"/></svg></span>
      <span class="flex h-[22px] items-center"><svg width="18" height="18" viewBox="0 0 18 18" fill="none" stroke="#444"><circle cx="7" cy="10" r="3.500"/><path d="M9.500 12.500L13 16M11 3h5M11 5.500h5M11 8h5"/></svg></span>
      <span class="flex h-[22px] items-center"><svg width="18" height="18" viewBox="0 0 18 18" fill="none" stroke="#444"><path d="M3 9l5-5 2 2 5-5M3 11h4M3 13h4M3 15h4"/><circle cx="11" cy="12" r="2.500"/><path d="M13 14l2 2"/></svg></span>
      <span class="flex h-[22px] items-center"><svg width="18" height="18" viewBox="0 0 18 18" fill="none" stroke="#444"><path d="M3 15V10l4 4 4-4 4 4v-4M6 9V3M4 5l2-2 2 2M12 3v5M10 6l2 2 2-2"/></svg></span>
      <span class="flex h-[22px] items-center"><svg width="18" height="18" viewBox="0 0 18 18" fill="none" stroke="#444"><path d="M3 3.500h11M14 3.500L3 9.500h11M14 9.500L3 14.500h11"/></svg></span>
      <span class="flex h-[22px] items-center"><svg width="18" height="18" viewBox="0 0 18 18" fill="none" stroke="#444"><path d="M3.500 3v12M7.500 3v12M10.500 3v12M14.500 3v12"/></svg></span>
      <span class="flex h-[22px] items-center"><svg width="18" height="18" viewBox="0 0 18 18" fill="none" stroke="#444"><path d="M3.500 3v12M7.500 3v12M11 3v12M14.500 3v12"/></svg></span>
      <span class="flex h-[22px] items-center"><svg width="18" height="18" viewBox="0 0 18 18" fill="none" stroke="#444"><path d="M5 11a5 4 0 1 0 2-6M5 11l-2-1M5 11l-1 3 3-1"/></svg></span>
      <span class="flex h-[22px] items-center"><svg width="18" height="18" viewBox="0 0 18 18" fill="none" stroke="#444"><path d="M13 11a5 4 0 1 1-2-6M13 11v3M13 11l-3 1M13 11l2 2"/></svg></span>
      <span class="flex h-[22px] items-center"><svg width="18" height="18" viewBox="0 0 18 18" fill="none" stroke="#444"><circle cx="8" cy="8" r="4"/><path d="M11 11l4 4"/></svg></span>
    </nav>
    <span class="ml-[6px] h-[731px] w-[2px] shrink-0 bg-[#8a8a8a]"></span>
    <span class="ml-[2px] h-[731px] w-[2px] shrink-0 bg-[#25461c]"></span>
  </div>
</div>

<script>
  // [red?, bodyTop, bodyBottom, wickTop, wickBottom] in page pixels
  const candles = [
    [1,269,285,264,296],[0,270,271,258,283],[0,265,274,238,320],[1,199,239,142,302],[1,171,206,152,253],[0,188,217,172,223],[1,188,225,180,227],[1,189,193,168,217],[0,189,236,188,245],[0,237,248,227,253],
    [0,245,258,220,258],[0,256,288,220,293],[0,289,307,273,316],[0,313,321,293,327],[0,321,345,310,356],[0,343,349,320,360],[0,337,365,320,366],[0,373,380,353,394],[0,382,419,382,420],[1,425,427,405,438],
    [1,412,430,405,441],[1,399,409,392,429],[0,393,403,388,412],[1,399,406,389,419],[0,401,408,385,415],[0,413,420,403,422],[0,421,436,412,439],[1,436,442,433,450],[0,442,444,423,446],[1,422,448,412,458],
    [1,413,417,408,441],[1,412,415,403,423],[0,409,415,405,420],[1,408,419,395,423],[0,416,456,416,463],[1,426,450,423,458],[0,425,495,425,497],[1,475,495,471,495],[0,477,484,474,491],[1,475,482,471,486],
    [0,476,477,469,481],[1,464,477,458,483],[1,467,468,441,479],[0,471,475,465,480],[0,477,480,472,487],[1,479,487,468,494],[1,477,479,467,482],[0,470,478,464,484],[0,479,511,479,515],[1,497,514,495,520],
    [1,495,496,486,501],[0,499,507,482,517],[1,487,512,479,516],[1,467,479,462,482],[1,450,465,448,470],[1,401,451,392,455],[0,403,413,389,422],[1,412,413,400,418],[1,397,415,388,418],[0,394,399,392,413],
    [0,402,422,398,435],[0,428,431,418,432],[1,415,430,382,440],[0,414,432,408,434],[1,402,430,398,430],[0,401,409,388,413],[1,393,404,388,405],[0,395,396,388,413],[0,396,432,392,432],[0,432,443,428,451],
    [1,422,442,401,445],[0,423,436,420,436],[0,431,458,418,462],[0,454,467,454,482],[0,467,472,461,482],[0,471,478,468,482],[0,474,479,468,479],[1,470,479,468,484],[0,469,481,463,484],[1,473,482,468,493],
    [1,464,475,455,477],[0,463,472,450,477],[1,474,476,473,485],[0,470,507,459,508],[0,507,520,505,525],[0,517,523,515,528],[0,522,533,520,534],[0,533,534,523,537],[0,534,539,530,546],[0,538,552,538,552],
    [1,539,552,537,553],[0,542,548,538,552],[0,547,557,545,572],[1,554,556,550,558],[0,556,565,548,568],[0,565,575,563,582],[0,577,578,565,578],[1,572,576,567,577],[0,573,580,570,583],[1,573,579,569,583],
    [0,573,592,570,593],[0,593,598,588,600],[0,598,600,594,602],[1,596,600,593,602],[1,592,598,578,600],[1,591,595,587,597],[1,569,589,565,597],[1,566,569,555,578],[0,566,580,562,580],[1,559,578,557,578],
    [1,549,557,547,563],[0,549,575,545,595],[0,582,591,573,595],[1,586,592,580,594],[1,582,583,560,587],[0,587,596,580,598],[0,599,600,593,603],[0,603,623,603,625],[1,620,621,617,626],[1,612,621,603,621],
    [1,608,609,603,614],[1,605,612,603,617],[0,603,611,600,612],[0,612,621,608,621],[0,619,627,615,628],[1,620,626,617,628],[0,620,622,615,625],[1,617,624,606,626],[0,616,620,609,626],[0,624,637,624,638],
    [0,637,645,636,646],[1,639,643,637,645],[1,633,637,630,638],[1,612,630,608,630],[1,603,612,598,613],[0,602,604,599,607],[0,605,619,598,620],[1,620,623,610,624],[0,621,630,620,631],[1,622,631,620,632],
    [0,624,632,623,633],[1,628,633,625,634],[1,627,631,623,632],[0,625,627,623,633],[0,627,632,625,634],[0,630,637,629,638],[1,630,637,623,649],[1,625,628,623,631],[1,621,624,620,627],[1,622,623,615,627]
  ];
  const ns = 'http://www.w3.org/2000/svg';
  const candleLayer = document.getElementById('candles');
  const barLayer = document.getElementById('bars');
  const bigBars = {0:740,1:740,2:728,3:708,4:723,5:737,6:737,7:738,8:740,36:738,133:739,134:740};

  function addRect(parent, x, y, w, h, fill) {
    const r = document.createElementNS(ns, 'rect');
    r.setAttribute('x', x); r.setAttribute('y', y);
    r.setAttribute('width', w); r.setAttribute('height', h);
    r.setAttribute('fill', fill);
    parent.appendChild(r);
  }

  candles.forEach((c, i) => {
    const x = Math.round(187 + 7.18 * i);
    const color = c[0] ? '#e00000' : '#0000cd';
    addRect(candleLayer, x, c[3], 1, c[4] - c[3], color);
    addRect(candleLayer, x - 3, c[1], 7, Math.max(c[2] - c[1], 2), color);
    // volume bar
    const top = bigBars[i] || 741 + (i * 7) % 3;
    addRect(barLayer, x - 3, top, 6, 746 - top, color);
  });

  // minor ticks on the price axis
  let d = '';
  for (let y = 97; y < 689; y += 16) d += 'M1306 ' + (y + .5) + 'H1309';
  for (const y of [129,210,291,372,453,533,614]) d += 'M1306 ' + (y + .5) + 'H1312';
  document.getElementById('axisTicks').setAttribute('d', d);
</script>
</body>
</html>
